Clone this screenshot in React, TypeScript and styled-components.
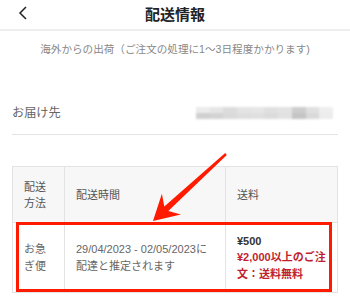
import React from "react";
import styled, { createGlobalStyle } from "styled-components";

const Global = createGlobalStyle`
  html, body { margin: 0; padding: 0; background: #fff; }
  body { font-family: "Liberation Sans", "Noto Sans CJK JP", sans-serif; width: 350px; height: 300px; overflow: hidden; }
`;

const Page = styled.div`
  position: relative;
  width: 350px;
  height: 300px;
  background: #fff;
`;

const Header = styled.header`
  position: relative;
  height: 29px;
  border-bottom: 2px solid #eeeeee;
  display: flex;
  align-items: center;
  justify-content: center;
`;

const Back = styled.button`
  position: absolute;
  left: 14px;
  top: 4px;
  width: 18px;
  height: 18px;
  padding: 0;
  border: none;
  background: none;
  display: flex;
  align-items: center;
  justify-content: center;
`;

const Title = styled.h1`
  margin: 0;
  font-size: 15px;
  font-weight: 700;
  color: #222;
  line-height: 24px;
  margin-top: 1px;
`;

const Notice = styled.p`
  margin: 0;
  padding-top: 12px;
  text-align: center;
  font-size: 10.6px;
  line-height: 13px;
  color: #888;
`;

const AddressRow = styled.div`
  margin: 34px 12px 0;
  height: 44px;
  border-bottom: 1px solid #e4e4e4;
  display: flex;
  align-items: center;
  justify-content: space-between;
`;

const Label = styled.span`
  font-size: 12.2px;
  color: #666;
`;

const Blur = styled.div`
  display: grid;
  grid-template-columns: repeat(10, 1fr);
  grid-template-rows: 6px 6px;
  width: 137px;
  margin-right: 5px;
  margin-top: 2px;
  filter: blur(1px);
`;

const Pix = styled.div<{ $c: string }>`
  background: ${(p) => p.$c};
`;

const TableWrap = styled.div`
  position: relative;
  margin: 31px 12px 0;
`;

const Table = styled.table`
  width: 100%;
  table-layout: fixed;
  border-collapse: collapse;
  font-size: 11px;
  line-height: 16px;
  color: #555;
`;

const Th = styled.th<{ $w?: number }>`
  box-sizing: border-box;
  background: #f7f7f7;
  border: 1px solid #e3e3e3;
  font-weight: 400;
  text-align: left;
  padding: 0 11px;
  height: 56px;
  ${(p) => (p.$w ? `width: ${p.$w}px;` : "")}
  color: #555;
`;

const Td = styled.td`
  box-sizing: border-box;
  border: 1px solid #e3e3e3;
  padding: 0 11px;
  height: 70px;
  vertical-align: middle;
  color: #666;
  white-space: nowrap;
  line-height: 16.5px;
`;

const Price = styled.div`
  font-weight: 700;
  color: #333;
`;

const Free = styled.div`
  font-weight: 700;
  color: #c01f2f;
`;

const Highlight = styled.div`
  position: absolute;
  left: 4px;
  top: 56px;
  width: 316px;
  height: 70px;
  box-sizing: border-box;
  border: 3.5px solid #ff1a00;
  pointer-events: none;
`;

const ArrowLayer = styled.svg`
  position: absolute;
  left: 0;
  top: 0;
  width: 350px;
  height: 300px;
  pointer-events: none;
`;

const pixels = [
  "#ececec", "#e6e6e6", "#dcdcdc", "#e4e4e4", "#e6e6e6", "#e0e0e0", "#e3e3e3", "#cdcdcd", "#e0e0e0", "#eeeeee",
  "#d0d0d0", "#d3d3d3", "#dadada", "#dedede", "#e0e0e0", "#dbdbdb", "#e2e2e2", "#c4c4c4", "#d9d9d9", "#ececec",
];

export default function App() {
  return (
    <Page>
      <Global />
      <Header>
        <Back aria-label="戻る">
          <svg width="10" height="14" viewBox="0 0 10 14">
            <polyline points="8,1 2,7 8,13" fill="none" stroke="#222" strokeWidth="1.5" />
          </svg>
        </Back>
        <Title>配送情報</Title>
      </Header>
      <Notice>海外からの出荷（ご注文の処理に1〜3日程度かかります)</Notice>
      <AddressRow>
        <Label>お届け先</Label>
        <Blur>
          {pixels.map((c, i) => (
            <Pix key={i} $c={c} />
          ))}
        </Blur>
      </AddressRow>
      <TableWrap>
        <Table>
          <thead>
            <tr>
              <Th $w={52}>
                配送
                <br />
                方法
              </Th>
              <Th $w={161}>配送時間</Th>
              <Th>送料</Th>
            </tr>
          </thead>
          <tbody>
            <tr>
              <Td>
                お急
                <br />
                ぎ便
              </Td>
              <Td>
                29/04/2023 - 02/05/2023に
                <br />
                配達と推定されます
              </Td>
              <Td>
                <Price>¥500</Price>
                <Free>
                  ¥2,000以上のご注
                  <br />
                  文：送料無料
                </Free>
              </Td>
            </tr>
          </tbody>
        </Table>
        <Highlight />
      </TableWrap>
      <ArrowLayer viewBox="0 0 350 300">
        <polygon
          points="225.2,153.1 164.3,206.6 161.9,193.8 153,221 180.9,214.4 168.3,211 226.8,154.9"
          fill="#ff1a00"
        />
      </ArrowLayer>
    </Page>
  );
}
